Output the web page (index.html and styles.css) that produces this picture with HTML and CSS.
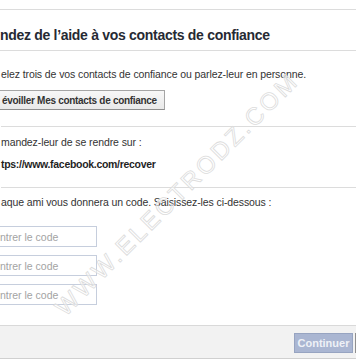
FILE: index.html
```html
<!DOCTYPE html>
<html lang="fr">
  <head>
    <meta charset="UTF-8" />
    <meta name="viewport" content="width=device-width, initial-scale=1.0" />
    <title>Demandez de l’aide à vos contacts de confiance</title>
    <link rel="stylesheet" href="styles.css">
  </head>
  <body>
    <div class="dialog">
      <div class="dialog-top"></div>

      <div class="dialog-header">
        <h2>ndez de l’aide à vos contacts de confiance</h2>
      </div>

      <div class="dialog-body">
        <div class="section">
          <p class="intro">elez trois de vos contacts de confiance ou parlez-leur en personne.</p>
          <button type="button" class="reveal-btn">évoiller Mes contacts de confiance</button>
        </div>

        <div class="section section-link">
          <p>mandez-leur de se rendre sur :</p>
          <p class="url">tps://www.facebook.com/recover</p>
        </div>

        <div class="section section-codes">
          <p>aque ami vous donnera un code. Saisissez-les ci-dessous :</p>
          <div class="codes">
            <input type="text" class="code-input" placeholder="ntrer le code" />
            <input type="text" class="code-input" placeholder="ntrer le code" />
            <input type="text" class="code-input" placeholder="ntrer le code" />
          </div>
        </div>
      </div>

      <div class="dialog-footer">
        <button type="button" class="btn-confirm" disabled>Continuer</button>
        <!-- next button, only its edge is in view -->
        <span class="btn-edge"></span>
      </div>
    </div>

    <!-- watermark over the screenshot -->
    <div class="watermark">WWW.ELECTRODZ.COM</div>
  </body>
</html>
```

FILE: styles.css
```css
html,
body {
  margin: 0;
  background: #fff;
}
body {
  width: 356px;
  height: 364px;
  overflow: hidden;
  position: relative;
  font-family: "Liberation Sans", Arial, sans-serif;
  font-size: 10.5px;
  letter-spacing: -0.1px;
  color: #333;
}
p {
  margin: 0;
  line-height: 14px;
  white-space: nowrap;
}

.dialog {
  width: 356px;
}
.dialog-top {
  height: 9px;
  border-bottom: 1px solid #dcdcdc;
}
.dialog-header {
  height: 41px;
  box-sizing: border-box;
  padding-top: 16px;
  border-bottom: 1px solid #dcdcdc;
}
.dialog-header h2 {
  margin: 0;
  font-size: 14px;
  line-height: 18px;
  letter-spacing: -0.3px;
  font-weight: bold;
  color: #262a33;
  white-space: nowrap;
}

.dialog-body {
  padding-left: 1px;
}
.section {
  border-bottom: 1px solid #dcdcdc;
}
.section:first-child {
  padding-top: 16px;
  padding-bottom: 16px;
}
.section-link {
  padding-top: 8px;
  padding-bottom: 16px;
}
.section-link .url {
  margin-top: 8px;
  font-weight: bold;
  letter-spacing: -0.3px;
  color: #1f1f1f;
}
.section-codes {
  border-bottom: none;
  padding-top: 7px;
  padding-bottom: 20px;
}

.reveal-btn {
  display: block;
  margin: 9px 0 0 -7px;
  height: 20px;
  padding: 0 7px 0 7px;
  border: 1px solid #a5a5a5;
  border-bottom-color: #8e8e8e;
  background: linear-gradient(#f7f7f7, #e9e9e9);
  font-family: inherit;
  font-size: 10px;
  letter-spacing: -0.3px;
  font-weight: bold;
  color: #333;
  white-space: nowrap;
}

.codes {
  display: flex;
  flex-direction: column;
  gap: 8px;
  margin-top: 17px;
}
.code-input {
  width: 101px;
  height: 21px;
  box-sizing: border-box;
  margin-left: -5px;
  padding: 0 3px;
  border: 1px solid #c6cedd;
  font-family: inherit;
  font-size: 10.5px;
  color: #333;
  outline: none;
}
.code-input::placeholder {
  color: #a3a3a3;
}

.dialog-footer {
  display: flex;
  justify-content: flex-end;
  gap: 2px;
  height: 34px;
  box-sizing: border-box;
  padding-top: 7px;
  margin-right: -56px;
  border-top: 1px solid #d9d9d9;
  border-bottom: 1px solid #d0d0d0;
  background: #f2f2f2;
}
.btn-confirm {
  width: 59px;
  height: 20px;
  padding: 0;
  border: 1px solid #97a4c1;
  background: #aab6d2;
  font-family: inherit;
  font-size: 11px;
  font-weight: bold;
  color: #eef1f7;
}
.btn-edge {
  width: 57px;
  height: 20px;
  box-sizing: border-box;
  border: 1px solid #8f8f8f;
  background: #eee;
}

.watermark {
  position: absolute;
  left: 177px;
  top: 194px;
  transform: translate(-50%, -50%) rotate(-45deg);
  font-family: "Liberation Sans", Arial, sans-serif;
  font-size: 24px;
  letter-spacing: 3px;
  color: rgba(255, 255, 255, 0.5);
  -webkit-text-stroke: 0.8px #dcdcdc;
  white-space: nowrap;
  pointer-events: none;
}
```
